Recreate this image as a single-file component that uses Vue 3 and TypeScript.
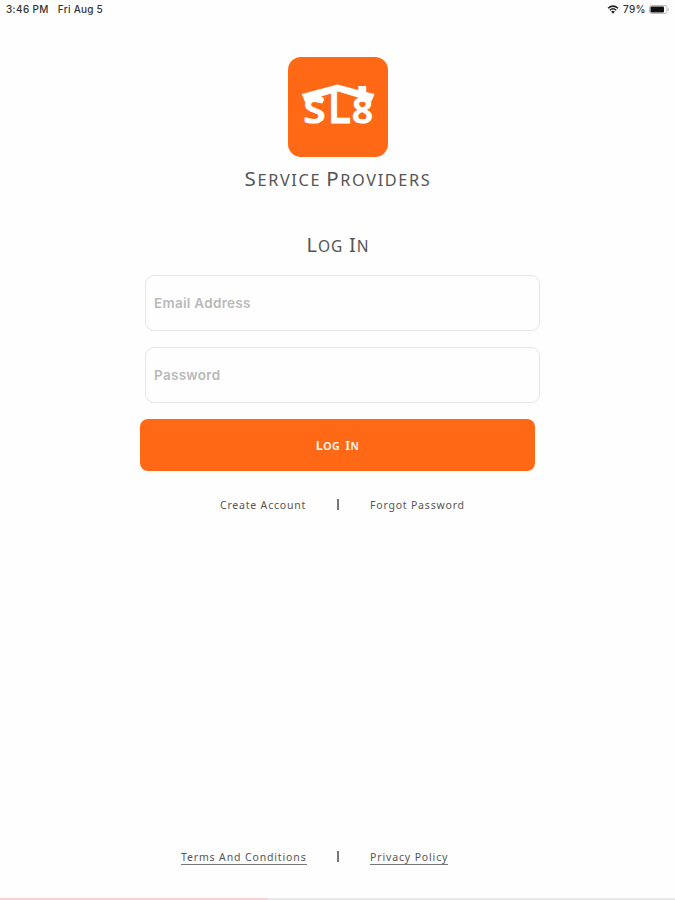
<script setup lang="ts">
import { ref } from 'vue'

const email = ref('')
const password = ref('')
const brand: string[] = ['Service', 'Providers']
const heading: string[] = ['Log', 'In']
</script>

<template>
  <main class="screen">
    <header class="status">
      <div class="clock"><span>3:46 PM</span><span class="date">Fri Aug 5</span></div>
      <div class="indicators">
        <svg class="wifi" viewBox="0 0 12 9" aria-hidden="true">
          <path d="M1 3.2Q6-1 11 3.2M2.8 5.1Q6 2.4 9.2 5.1" />
          <path class="dot" d="M4.1 6.5Q6 5 7.900 6.5L6 8.700Z" />
        </svg>
        <span class="percent">79%</span>
        <svg class="battery" viewBox="0 0 21 9" aria-hidden="true">
          <rect class="case" x=".5" y=".5" width="17.500" height="8" rx="2" />
          <rect class="charge" x="1.500" y="1.500" width="13.500" height="6" rx="1" />
          <path class="cap" d="M19 3Q21 4.500 19 6Z" />
        </svg>
      </div>
    </header>

    <section class="brand">
      <svg class="logo" viewBox="0 0 100 100" aria-label="SL8">
        <rect width="100" height="100" rx="13" class="tile" />
        <path class="roof" d="M13.700 37L49.500 27.500L70.300 33V29H78.200V35L86.500 37L83.500 44.500L73 41.500L50 34.500L33 39.500L36 41L33 45L23 43.500L17 45Z" />
        <text class="mark" x="15.500" y="65.500" textLength="22" lengthAdjust="spacingAndGlyphs">S</text>
        <text class="mark tall" x="39.500" y="66" textLength="23.500" lengthAdjust="spacingAndGlyphs">L</text>
        <text class="mark" x="64" y="65.500" textLength="21" lengthAdjust="spacingAndGlyphs">8</text>
      </svg>
      <h1 class="caps title"><span v-for="word in brand" :key="word" class="word">{{ word }}</span></h1>
    </section>

    <form class="form" @submit.prevent>
      <h2 class="caps heading"><span v-for="word in heading" :key="word" class="word">{{ word }}</span></h2>
      <input v-model="email" class="field" type="email" placeholder="Email Address" />
      <input v-model="password" class="field" type="password" placeholder="Password" />
      <button class="caps submit" type="submit"><span v-for="word in heading" :key="word" class="word">{{ word }}</span></button>
    </form>

    <nav class="links account">
      <a class="first">Create Account</a><span class="bar"></span><a class="second">Forgot Password</a>
    </nav>

    <footer class="links legal">
      <a class="first">Terms And Conditions</a><span class="bar"></span><a class="second">Privacy Policy</a>
    </footer>
    <div class="progress"></div>
  </main>
</template>

<style>
body { margin: 0; background: #fefefe; }
</style>

<style scoped>
* { box-sizing: border-box; }
.screen { display: flex; flex-direction: column; height: 900px; overflow: hidden; background: #fefefe; font-family: "Noto Sans", sans-serif; color: #555; }
.status { display: flex; justify-content: space-between; height: 18px; padding: 0 5px 0 6px; align-items: center; font: 500 10px/18px Inter, sans-serif; color: #333; }
.clock, .indicators { display: flex; align-items: center; }
.clock { gap: 9px; letter-spacing: .35px; }
.date { letter-spacing: .25px; }
.wifi { width: 12px; height: 9px; margin-right: 4px; }
.wifi path { fill: none; stroke: #222; stroke-width: 1.5; }
.wifi .dot { fill: #222; stroke: none; }
.percent { width: 26px; letter-spacing: .35px; }
.battery { width: 21px; height: 9px; }
.case { fill: #fff; stroke: #aaa; stroke-width: .8; }
.charge { fill: #111; }
.cap { fill: #aaa; }
.brand { display: flex; flex-direction: column; align-items: center; padding-top: 39px; }
.logo { width: 100px; height: 100px; }
.tile { fill: #ff6814; }
.roof { fill: #fff; }
.mark { fill: #fff; stroke: #fff; stroke-width: 1.2; font: 600 35px "Open Sans", sans-serif; }
.tall { font-size: 48px; stroke-width: .8; }
.caps { display: flex; justify-content: center; align-items: baseline; margin: 0; font-weight: 400; text-transform: uppercase; }
.word { display: block; white-space: nowrap; }
.title { gap: 5px; height: 30px; margin: 6px 0 1px; padding-left: 1px; font-size: 16.300px; line-height: 30px; letter-spacing: 1.650px; }
.title .word::first-letter { font-size: 20.500px; }
.form { display: flex; flex-direction: column; padding: 36px 135px 0 140px; }
.heading { align-self: center; height: 30px; gap: 6px; margin-bottom: 15px; padding-right: 4px; font-size: 15.500px; line-height: 30px; letter-spacing: .9px; }
.heading .word::first-letter { font-size: 20px; }
.field { width: 395px; height: 56px; margin: 0 0 16px 5px; padding: 0 8px; border: 1.500px solid #e6e6e6; border-radius: 9px; outline: 0; background: #fefefe; font: 600 13.500px Inter, sans-serif; letter-spacing: .3px; }
.field::placeholder { color: #b9b9b9; opacity: 1; }
.submit { width: 395px; height: 52px; padding: 0; border: 0; border-radius: 8px; gap: 5px; background: #ff6814; color: #fff; font: 600 10.500px/52px "Noto Sans", sans-serif; letter-spacing: .5px; }
.submit .word::first-letter { font-size: 13px; }
.links { display: grid; align-items: start; font-size: 10.500px; line-height: 14px; letter-spacing: .8px; }
.links a { justify-self: start; white-space: nowrap; }
.bar { width: 1.500px; height: 11px; margin-top: 1px; background: #777; }
.account { grid-template-columns: 117px 33px 1fr; padding: 27px 0 0 220px; }
.legal { grid-template-columns: 156px 33px 1fr; margin-top: auto; padding: 0 0 33px 181px; letter-spacing: .86px; }
.legal a { height: 15px; border-bottom: 1px solid #777; }
.progress { height: 2px; background: linear-gradient(90deg, #f9d0d4 0 268px, #e8e8e8 268px); }
</style>
